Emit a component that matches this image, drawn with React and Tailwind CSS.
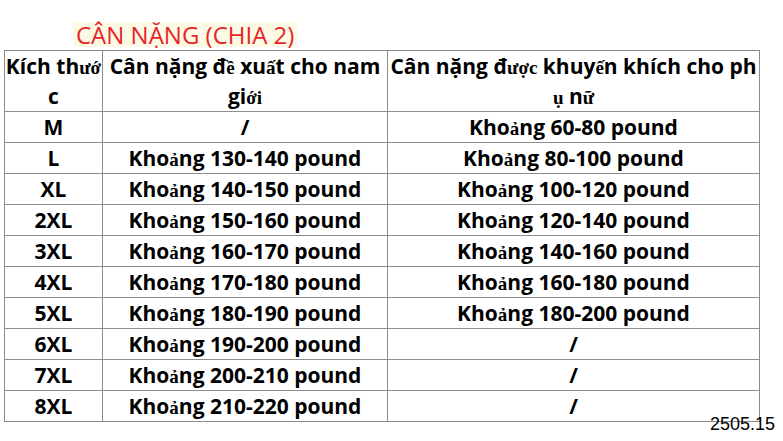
const rows = [
  ['M', null, '60-80'],
  ['L', '130-140', '80-100'],
  ['XL', '140-150', '100-120'],
  ['2XL', '150-160', '120-140'],
  ['3XL', '160-170', '140-160'],
  ['4XL', '170-180', '160-180'],
  ['5XL', '180-190', '180-200'],
  ['6XL', '190-200', null],
  ['7XL', '200-210', null],
  ['8XL', '210-220', null],
]

// glyphs that fell back to a serif face in the source image
function S({ children }) {
  return <span className="font-['Liberation_Serif',serif] text-[19px] leading-none font-bold">{children}</span>
}

function Range({ v }) {
  if (!v) return <span>/</span>
  return <span>Kho<S>ả</S>ng {v} pound</span>
}

const cell = 'border border-[#8c8c8c] text-center whitespace-nowrap p-0'

export default function App() {
  return (
    <div className="relative w-[783px] h-[441px] bg-white overflow-hidden font-['Open_Sans',sans-serif] text-black">
      <div className="h-[22px]" />
      <div className="pl-[73px]">
        <span className="inline-block bg-[#fcfae4] px-[3px] text-[24px] leading-[25px] text-[#e8242b]">CÂN NẶNG (CHIA 2)</span>
      </div>
      <table className="ml-[4px] border-collapse table-fixed text-[21px] font-bold leading-[30px]">
        <colgroup>
          <col className="w-[98px]" />
          <col className="w-[285px]" />
          <col className="w-[372px]" />
        </colgroup>
        <thead className="leading-[30px]">
          <tr>
            <th className={cell}>Kích th<S>ướ</S><br />c</th>
            <th className={cell}>Cân nặng đ<S>ề</S> xu<S>ấ</S>t cho nam<br />gi<S>ới</S></th>
            <th className={cell}>Cân nặng đ<S>ược</S> khuy<S>ế</S>n khích cho ph<br /><S>ụ</S> n<S>ữ</S></th>
          </tr>
        </thead>
        <tbody>
          {rows.map(([size, m, w]) => (
            <tr key={size}>
              <td className={cell}>{size}</td>
              <td className={cell}><Range v={m} /></td>
              <td className={cell}><Range v={w} /></td>
            </tr>
          ))}
        </tbody>
      </table>
      <div className="absolute left-[710px] top-[414px] font-['Liberation_Sans',sans-serif] text-[18px] leading-[20px]">2505.15</div>
    </div>
  )
}
